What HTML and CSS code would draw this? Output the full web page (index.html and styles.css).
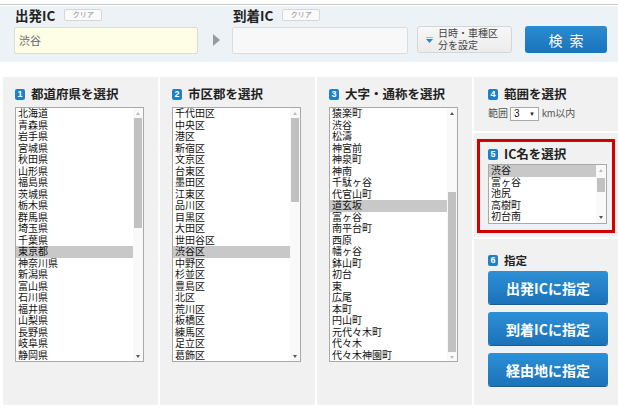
FILE: index.html
```html
<!DOCTYPE html>
<html lang="ja">
<head>
<meta charset="utf-8">
<title>IC検索</title>
<link rel="stylesheet" href="styles.css">
</head>
<body>
<div class="topline"></div>
<div class="top">
  <div class="field">
    <div class="label-row"><span class="label">出発IC</span><span class="clear">クリア</span></div>
    <div class="input from">渋谷</div>
  </div>
  <div class="arrow"></div>
  <div class="field to">
    <div class="label-row"><span class="label">到着IC</span><span class="clear">クリア</span></div>
    <div class="input"></div>
  </div>
  <div class="settings">
    <svg class="set-icon" width="7" height="6" viewBox="0 0 7 6"><rect x="0" y="0" width="7" height="1" fill="#9bbbd6"/><path d="M0 2 L7 2 L3.5 6 Z" fill="#2f86cc"/></svg>
    <span class="set-text">日時・車種区<br>分を設定</span>
  </div>
  <div class="search">検索</div>
</div>

<div class="panels">
  <section class="panel">
    <h2 class="head"><span class="badge">1</span>都道府県を選択</h2>
    <div class="listbox">
      <ul class="items">
        <li>北海道</li><li>青森県</li><li>岩手県</li><li>宮城県</li><li>秋田県</li><li>山形県</li><li>福島県</li><li>茨城県</li><li>栃木県</li><li>群馬県</li><li>埼玉県</li><li>千葉県</li><li class="sel">東京都</li><li>神奈川県</li><li>新潟県</li><li>富山県</li><li>石川県</li><li>福井県</li><li>山梨県</li><li>長野県</li><li>岐阜県</li><li>静岡県</li>
      </ul>
      <div class="sb">
        <span class="sb-btn sb-up off"></span>
        <div class="sb-track"><div class="sb-thumb" style="margin-top:0;height:110px"></div></div>
        <span class="sb-btn sb-down"></span>
      </div>
    </div>
  </section>

  <section class="panel">
    <h2 class="head"><span class="badge">2</span>市区郡を選択</h2>
    <div class="listbox">
      <ul class="items">
        <li>千代田区</li><li>中央区</li><li>港区</li><li>新宿区</li><li>文京区</li><li>台東区</li><li>墨田区</li><li>江東区</li><li>品川区</li><li>目黒区</li><li>大田区</li><li>世田谷区</li><li class="sel">渋谷区</li><li>中野区</li><li>杉並区</li><li>豊島区</li><li>北区</li><li>荒川区</li><li>板橋区</li><li>練馬区</li><li>足立区</li><li>葛飾区</li>
      </ul>
      <div class="sb">
        <span class="sb-btn sb-up off"></span>
        <div class="sb-track"><div class="sb-thumb" style="margin-top:0;height:84px"></div></div>
        <span class="sb-btn sb-down"></span>
      </div>
    </div>
  </section>

  <section class="panel">
    <h2 class="head"><span class="badge">3</span>大字・通称を選択</h2>
    <div class="listbox">
      <ul class="items">
        <li>猿楽町</li><li>渋谷</li><li>松濤</li><li>神宮前</li><li>神泉町</li><li>神南</li><li>千駄ヶ谷</li><li>代官山町</li><li class="sel">道玄坂</li><li>富ヶ谷</li><li>南平台町</li><li>西原</li><li>幡ヶ谷</li><li>鉢山町</li><li>初台</li><li>東</li><li>広尾</li><li>本町</li><li>円山町</li><li>元代々木町</li><li>代々木</li><li>代々木神園町</li>
      </ul>
      <div class="sb">
        <span class="sb-btn sb-up"></span>
        <div class="sb-track"><div class="sb-thumb" style="margin-top:74px;height:160px"></div></div>
        <span class="sb-btn sb-down off"></span>
      </div>
    </div>
  </section>

  <section class="panel4">
    <div class="block block-range">
      <h2 class="head"><span class="badge">4</span>範囲を選択</h2>
      <div class="range-row">
        <span>範囲</span>
        <span class="mini-select"><span>3</span><span class="mini-caret">▼</span></span>
        <span class="unit">km以内</span>
      </div>
    </div>
    <div class="block block-ic">
      <div class="redbox">
        <h2 class="head"><span class="badge">5</span>IC名を選択</h2>
        <div class="listbox short">
          <ul class="items">
            <li class="sel">渋谷</li><li>富ヶ谷</li><li>池尻</li><li>高樹町</li><li>初台南</li>
          </ul>
          <div class="sb">
            <span class="sb-btn sb-up off"></span>
            <div class="sb-track"><div class="sb-thumb" style="margin-top:3px;height:14px"></div></div>
            <span class="sb-btn sb-down"></span>
          </div>
        </div>
      </div>
    </div>
    <div class="block block-assign">
      <h2 class="head small"><span class="badge">6</span>指定</h2>
      <div class="btns">
        <div class="btn">出発ICに指定</div>
        <div class="btn">到着ICに指定</div>
        <div class="btn">経由地に指定</div>
      </div>
    </div>
  </section>
</div>
</body>
</html>
```
FILE: styles.css
```css
html, body {
  margin: 0;
  padding: 0;
}
body {
  width: 618px;
  height: 417px;
  overflow: hidden;
  background: #fff;
  color: #333;
  font-family: "Noto Sans CJK JP", "Noto Sans", sans-serif;
}

.topline {
  height: 4px;
  border-bottom: 1px solid #c9c9c9;
  margin-bottom: 1px;
}

/* ---------- top search bar ---------- */
.top {
  display: flex;
  align-items: flex-end;
  height: 56px;
  box-sizing: border-box;
  padding: 0 0 8px 14px;
  background: #edf2f7;
}
.field {
  width: 184px;
  display: flex;
  flex-direction: column;
}
.field.to {
  width: 176px;
}
.label-row {
  display: flex;
  align-items: center;
  height: 14px;
  margin-bottom: 5px;
}
.label {
  font-size: 13.5px;
  font-weight: bold;
  color: #222;
  line-height: 14px;
  padding-left: 1px;
}
.clear {
  margin-left: 9px;
  width: 38px;
  height: 12px;
  box-sizing: border-box;
  border: 1px solid #d6d6d6;
  border-radius: 2px;
  background: #fafafa;
  font-family: "Liberation Sans", "Noto Sans CJK JP", sans-serif;
  font-size: 7px;
  line-height: 10px;
  color: #888;
  display: flex;
  align-items: center;
  justify-content: center;
}
.input {
  height: 27px;
  box-sizing: border-box;
  border: 1px solid #dcdcdc;
  border-radius: 2px;
  background: #f8f8f8;
  font-size: 11px;
  line-height: 25px;
  color: #666;
  padding-left: 4px;
}
.input.from {
  background: #fefde6;
}
.arrow {
  width: 0;
  height: 0;
  border-left: 7px solid #9a9a9a;
  border-top: 6.5px solid transparent;
  border-bottom: 6.5px solid transparent;
  margin: 0 12px 8px 15px;
}
.settings {
  margin: 0 0 1px 9px;
  width: 95px;
  height: 27px;
  box-sizing: border-box;
  border: 1px solid #d6d6d6;
  border-radius: 3px;
  background: linear-gradient(#f7f7f7, #ececec);
  display: flex;
  align-items: center;
  padding-left: 8px;
  color: #444;
}
.set-icon {
  margin-right: 5px;
  flex: none;
}
.set-text {
  font-family: "Liberation Sans", "Noto Sans CJK JP", sans-serif;
  font-size: 10px;
  line-height: 11.5px;
}
.search {
  margin: 0 0 1px 13px;
  width: 82px;
  height: 27px;
  box-sizing: border-box;
  border-radius: 3px;
  background: linear-gradient(#2a8bd1, #1a74ba);
  color: #fff;
  font-size: 14px;
  letter-spacing: 7px;
  padding-left: 7px;
  display: flex;
  align-items: center;
  justify-content: center;
}

/* ---------- panels ---------- */
.panels {
  display: grid;
  grid-template-columns: 155px 155px 155px 144px;
  column-gap: 2px;
  margin: 15px 0 0 3px;
  height: 328px;
}
.panel {
  background: #f1f1f1;
  padding: 9px 12px 0 12px;
}
.head {
  margin: 0 0 5px;
  height: 16px;
  display: flex;
  align-items: center;
  font-size: 12.5px;
  font-weight: bold;
  line-height: 16px;
  color: #222;
  white-space: nowrap;
}
.head.small {
  font-size: 11.5px;
  margin-bottom: 3px;
}
.badge {
  width: 10px;
  height: 11px;
  flex: none;
  background: #1f80c6;
  border-radius: 2px;
  color: #fff;
  font-family: "Liberation Sans", sans-serif;
  font-size: 9px;
  font-weight: bold;
  line-height: 11px;
  text-align: center;
  margin-right: 6px;
}

.listbox {
  display: flex;
  width: 129px;
  height: 255px;
  box-sizing: border-box;
  border: 1px solid #a9a9a9;
  background: #fff;
}
.listbox.short {
  width: 119px;
  height: 59.5px;
}
.items {
  list-style: none;
  margin: 0;
  padding: 0;
  flex: 1;
  font-family: "Liberation Sans", "Noto Sans CJK JP", sans-serif;
  font-size: 10px;
  line-height: 11.5px;
  color: #111;
  overflow: hidden;
}
.items li {
  height: 11.5px;
  padding-left: 2px;
  white-space: nowrap;
}
.items li.sel {
  background: #c8c8c8;
}
.sb {
  width: 10px;
  flex: none;
  display: flex;
  flex-direction: column;
  background: #f9f9f9;
}
.sb-btn {
  height: 10px;
  flex: none;
  display: flex;
  align-items: center;
  justify-content: center;
}
.sb-btn::before {
  content: "";
  width: 0;
  height: 0;
  border-left: 2.5px solid transparent;
  border-right: 2.5px solid transparent;
}
.sb-up::before {
  border-bottom: 3px solid #555;
}
.sb-down::before {
  border-top: 3px solid #555;
}
.sb-up.off::before {
  border-bottom-color: #bdbdbd;
}
.sb-down.off::before {
  border-top-color: #bdbdbd;
}
.sb-track {
  flex: 1;
}
.sb-thumb {
  width: 8px;
  margin-left: 1px;
  background: #c1c1c1;
}

/* ---------- panel 4 ---------- */
.panel4 {
  display: flex;
  flex-direction: column;
  gap: 2px;
}
.block {
  background: #f1f1f1;
}
.block-range {
  height: 54px;
  box-sizing: border-box;
  padding: 9px 0 0 14px;
}
.range-row {
  display: flex;
  align-items: center;
  height: 14px;
  margin-top: 4px;
  font-family: "Liberation Sans", "Noto Sans CJK JP", sans-serif;
  font-size: 10px;
  line-height: 12px;
  color: #555;
}
.mini-select {
  margin-left: 2px;
  width: 29px;
  height: 14px;
  box-sizing: border-box;
  border: 1px solid #a9a9a9;
  background: #fff;
  display: flex;
  align-items: center;
  justify-content: space-between;
  padding: 0 3px 0 3px;
  color: #222;
}
.mini-caret {
  font-size: 6px;
}
.unit {
  margin-left: 3px;
}
.block-ic {
  height: 104px;
  box-sizing: border-box;
  padding: 6px 3px 0 3px;
}
.redbox {
  height: 94px;
  box-sizing: border-box;
  border: 3px solid #d40000;
  padding: 4px 0 0 8px;
}
.redbox .head {
  margin-bottom: 2px;
}
.block-assign {
  flex: 1;
  padding: 13px 0 0 14px;
}
.btns {
  display: flex;
  flex-direction: column;
  gap: 8px;
}
.btn {
  width: 120px;
  height: 33px;
  box-sizing: border-box;
  border-radius: 3px;
  background: linear-gradient(#2d90d6, #1b72b9);
  box-shadow: 0 1px 0 #175e98;
  color: #fff;
  font-size: 14px;
  font-weight: bold;
  display: flex;
  align-items: center;
  justify-content: center;
}
```
